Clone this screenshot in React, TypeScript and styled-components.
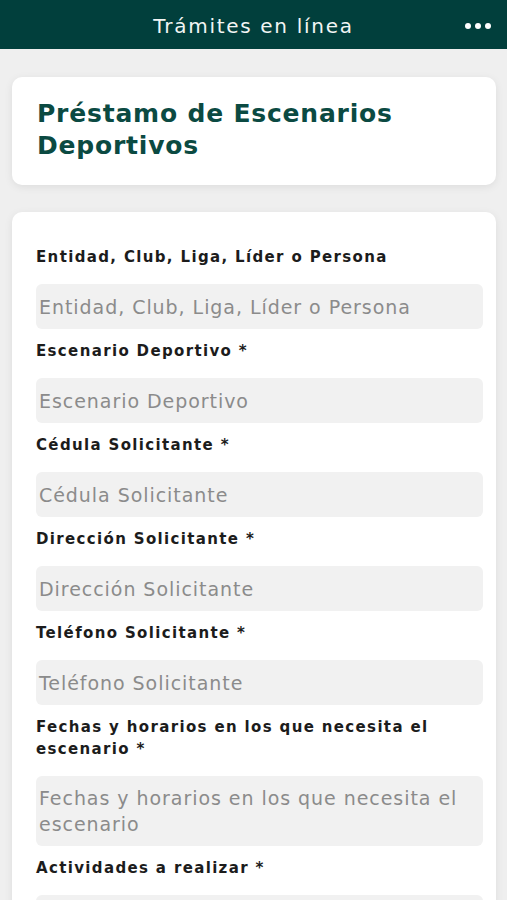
import React from "react";
import styled, { createGlobalStyle } from "styled-components";

const Global = createGlobalStyle`
  html, body { margin: 0; padding: 0; background: #efefef; }
  body { font-family: "DejaVu Sans", "Noto Sans", sans-serif; }
  * { box-sizing: border-box; }
`;

const Page = styled.div`
  width: 507px;
  height: 900px;
  background: #efefef;
  overflow: hidden;
`;

const Header = styled.header`
  height: 49px;
  padding-top: 3px;
  background: #013f3c;
  display: flex;
  align-items: center;
  justify-content: center;
  position: relative;
`;

const HeaderTitle = styled.h1`
  margin: 0;
  color: #f2f5f4;
  font-size: 20px;
  font-weight: 500;
  letter-spacing: 1.7px;
`;

const Dots = styled.div`
  position: absolute;
  right: 16px;
  top: 23px;
  display: flex;
  gap: 4px;
`;

const Dot = styled.span`
  width: 6px;
  height: 6px;
  border-radius: 50%;
  background: #ffffff;
`;

const Content = styled.main`
  padding: 28px 11px 0 12px;
  display: flex;
  flex-direction: column;
  gap: 27px;
`;

const Card = styled.section<{ $pad: string }>`
  background: #ffffff;
  border-radius: 10px;
  box-shadow: 0 2px 8px rgba(0, 0, 0, 0.08);
  padding: ${(p) => p.$pad};
`;

const Title = styled.h2`
  margin: 0;
  color: #0b4a42;
  font-size: 25px;
  line-height: 32px;
  font-weight: 700;
  letter-spacing: 0.8px;
`;

const Field = styled.div`
  display: flex;
  flex-direction: column;
  margin-bottom: 11px;
`;

const Label = styled.label`
  color: #1c1c1c;
  font-size: 15px;
  line-height: 22px;
  font-weight: 700;
  letter-spacing: 1.35px;
  margin-bottom: 16px;
`;

const Input = styled.div<{ $tall?: boolean }>`
  background: #f1f1f1;
  border-radius: 6px;
  min-height: 45px;
  padding: ${(p) => (p.$tall ? "9px 8px 9px 3px" : "0 8px 0 3px")};
  display: flex;
  align-items: ${(p) => (p.$tall ? "flex-start" : "center")};
  color: #8b8b8b;
  font-size: 19px;
  line-height: 26px;
  letter-spacing: 0.95px;
`;

const fields: { label: string; required: boolean; tall?: boolean }[] = [
  { label: "Entidad, Club, Liga, Líder o Persona", required: false },
  { label: "Escenario Deportivo", required: true },
  { label: "Cédula Solicitante", required: true },
  { label: "Dirección Solicitante", required: true },
  { label: "Teléfono Solicitante", required: true },
  { label: "Fechas y horarios en los que necesita el escenario", required: true, tall: true },
  { label: "Actividades a realizar", required: true },
];

export default function App() {
  return (
    <Page>
      <Global />
      <Header>
        <HeaderTitle>Trámites en línea</HeaderTitle>
        <Dots>
          <Dot />
          <Dot />
          <Dot />
        </Dots>
      </Header>
      <Content>
        <Card $pad="21px 24px 23px 25px">
          <Title>Préstamo de Escenarios Deportivos</Title>
        </Card>
        <Card $pad="34px 13px 0 24px">
          {fields.map((f) => (
            <Field key={f.label}>
              <Label>
                {f.label}
                {f.required ? " *" : ""}
              </Label>
              <Input $tall={f.tall}>{f.label}</Input>
            </Field>
          ))}
        </Card>
      </Content>
    </Page>
  );
}
